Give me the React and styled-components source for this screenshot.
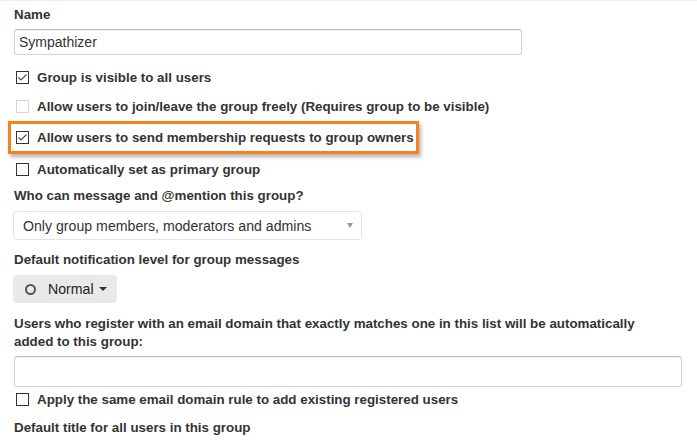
import React from "react";
import styled, { createGlobalStyle } from "styled-components";

const Global = createGlobalStyle`
  body {
    margin: 0;
    background: #fff;
    font-family: "Liberation Sans", Arial, sans-serif;
    color: #333;
  }
`;

const Page = styled.div`
  width: 697px;
  height: 440px;
  overflow: hidden;
  border-top: 1px solid #f0f0f0;
  box-sizing: border-box;
  padding: 5px 0 0 14px;
`;

const Label = styled.div`
  font-size: 13.35px;
  font-weight: bold;
  line-height: 18px;
  margin: ${(p) => p.$m || "0"};
  max-width: 660px;
`;

const TextInput = styled.div`
  box-sizing: border-box;
  width: ${(p) => p.$w}px;
  height: ${(p) => p.$h}px;
  margin: ${(p) => p.$m || "0"};
  border: 1px solid #d4d4d4;
  border-top-color: #bdbdbd;
  border-radius: 3px;
  box-shadow: inset 0 1px 1px rgba(0, 0, 0, 0.06);
  font-size: 14px;
  display: flex;
  align-items: center;
  padding-left: 4px;
  color: #333;
`;

const Row = styled.label`
  display: flex;
  align-items: center;
  gap: 8px;
  height: ${(p) => p.$h || 30}px;
  padding-left: 2px;
  font-size: 13.35px;
  font-weight: bold;
  white-space: nowrap;
`;

const Highlight = styled(Row)`
  width: fit-content;
  height: 27px;
  margin: 0 0 0 -6px;
  padding: 0 2px 0 5px;
  border: 3px solid #f7821b;
  box-shadow: 2px 3px 4px rgba(0, 0, 0, 0.3);
`;

const Box = styled.span`
  width: 13px;
  height: 13px;
  box-sizing: border-box;
  border: 1px solid ${(p) => (p.$disabled ? "#d6d6d6" : "#333")};
  background: #fff;
  display: flex;
  align-items: center;
  justify-content: center;
  flex-shrink: 0;
`;

const Check = ({ checked, disabled }) => (
  <Box $disabled={disabled}>
    {checked && (
      <svg width="11" height="11" viewBox="0 0 11 11">
        <path d="M1.5 5.5 L4 8 L9.5 2.5" fill="none" stroke="#4d4d4d" strokeWidth="1.2" />
      </svg>
    )}
  </Box>
);

const Select = styled.div`
  box-sizing: border-box;
  width: 349px;
  height: 29px;
  margin: 6px 0 0 -1px;
  border: 1px solid #e3e3e3;
  border-radius: 4px;
  display: flex;
  align-items: center;
  justify-content: space-between;
  padding: 0 8px 0 9px;
  font-size: 14.15px;
`;

const Arrow = styled.span`
  width: 0;
  height: 0;
  border-left: 3px solid transparent;
  border-right: 3px solid transparent;
  border-top: 5px solid #9a9a9a;
`;

const Button = styled.div`
  box-sizing: border-box;
  width: 104px;
  height: 28px;
  margin: 6px 0 0 -1px;
  border-radius: 4px;
  background: #e9e9e9;
  display: flex;
  align-items: center;
  padding-left: 12px;
  gap: 12px;
  font-size: 14.15px;
  color: #222;
`;

const Ring = styled.span`
  width: 11px;
  height: 11px;
  box-sizing: border-box;
  border: 2px solid #555;
  border-radius: 50%;
`;

const Caret = styled.span`
  width: 0;
  height: 0;
  margin-left: -7px;
  border-left: 4px solid transparent;
  border-right: 4px solid transparent;
  border-top: 4px solid #333;
`;

export default function App() {
  return (
    <>
      <Global />
      <Page>
        <Label>Name</Label>
        <TextInput $w={508} $h={26} $m="5px 0 0 0">Sympathizer</TextInput>

        <div style={{ height: 7 }} />
        <Row>
          <Check checked />
          Group is visible to all users
        </Row>
        <Row $h={29}>
          <Check disabled />
          Allow users to join/leave the group freely (Requires group to be visible)
        </Row>
        <Highlight>
          <Check checked />
          Allow users to send membership requests to group owners
        </Highlight>
        <Row>
          <Check />
          Automatically set as primary group
        </Row>

        <Label $m="3px 0 0 0">Who can message and @mention this group?</Label>
        <Select>
          Only group members, moderators and admins
          <Arrow />
        </Select>

        <Label $m="11px 0 0 0">Default notification level for group messages</Label>
        <Button>
          <Ring />
          Normal
          <Caret />
        </Button>

        <Label $m="12px 0 0 0">
          Users who register with an email domain that exactly matches one in this list will be automatically added to this group:
        </Label>
        <TextInput $w={668} $h={31} $m="5px 0 0 0" />
        <Row $h={24}>
          <Check />
          Apply the same email domain rule to add existing registered users
        </Row>
        <Label $m="8px 0 0 0">Default title for all users in this group</Label>
      </Page>
    </>
  );
}
